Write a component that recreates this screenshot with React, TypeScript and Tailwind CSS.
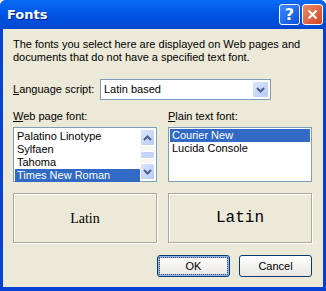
import React from 'react';

const ui = { fontFamily: '"Liberation Sans", Tahoma, sans-serif' };

const Chevron = ({ up = false }: { up?: boolean }) => (
  <svg width="9" height="6" viewBox="0 0 9 6" className={up ? 'rotate-180' : ''}>
    <path d="M1 1 L4.5 4.5 L8 1" fill="none" stroke="#4d6185" strokeWidth="2" />
  </svg>
);

const ScrollBtn = ({ up = false }: { up?: boolean }) => (
  <div className="flex h-[17px] w-[15px] items-center justify-center rounded-[2px] border border-white bg-gradient-to-br from-[#dbe6fd] to-[#b7cbf6]">
    <Chevron up={up} />
  </div>
);

const WebFonts = ['Palatino Linotype', 'Sylfaen', 'Tahoma', 'Times New Roman'];
const PlainFonts = ['Courier New', 'Lucida Console'];

const Item = ({ name, selected }: { name: string; selected?: boolean }) => (
  <div className={`h-[13px] pl-[2px] leading-[13px] ${selected ? 'bg-[#316ac5] text-white' : 'text-black'}`}>{name}</div>
);

export default function App() {
  return (
    <div className="flex h-[291px] w-[326px] flex-col rounded-t-[6px] bg-[#0842d4] text-[11px]" style={ui}>
      {/* title bar */}
      <div className="flex h-[29px] items-center rounded-t-[6px] bg-gradient-to-b from-[#0a6af7] via-[#0054e3] to-[#0046d0] pl-[7px] pr-[3px]">
        <span className="flex-1 text-[13px] font-bold text-white [text-shadow:1px_1px_#0a1e8c]" style={{ fontFamily: '"DejaVu Sans", sans-serif' }}>
          Fonts
        </span>
        <div className="flex gap-[2px]">
          <div className="flex h-[21px] w-[21px] items-center justify-center rounded-[3px] border border-white bg-gradient-to-br from-[#3c8cff] to-[#0a4fd8] text-[16px] font-bold leading-none text-white" style={{ fontFamily: '"DejaVu Sans", sans-serif' }}>
            ?
          </div>
          <div className="flex h-[21px] w-[21px] items-center justify-center rounded-[3px] border border-white bg-gradient-to-br from-[#e88a6a] to-[#d3421c]">
            <svg width="11" height="11" viewBox="0 0 11 11">
              <path d="M1.5 1.5 L9.5 9.5 M9.5 1.5 L1.5 9.5" stroke="white" strokeWidth="2.2" />
            </svg>
          </div>
        </div>
      </div>

      {/* body */}
      <div className="mx-[3px] mb-[4px] flex flex-1 flex-col bg-[#ece9d8] pl-[10px] pr-[11px] pt-[9px] text-black">
        <p className="leading-[13px]">
          The fonts you select here are displayed on Web pages and
          <br />
          documents that do not have a specified text font.
        </p>

        <div className="mt-[15px] flex h-[21px] items-center">
          <span className="w-[87px]">
            <u>L</u>anguage script:
          </span>
          <div className="flex h-[21px] w-[171px] items-center border border-[#7f9db9] bg-white pl-[3px] pr-[1px]">
            <span className="flex-1">Latin based</span>
            <div className="flex h-[17px] w-[17px] items-center justify-center rounded-[2px] border border-white bg-gradient-to-br from-[#dbe6fd] to-[#b7cbf6]">
              <Chevron />
            </div>
          </div>
        </div>

        <div className="mt-[8px] flex gap-[11px]">
          <div className="w-[144px]">
            <div className="h-[19px]">
              <u>W</u>eb page font:
            </div>
            <div className="flex h-[55px] border border-[#7f9db9] bg-white p-[1px]">
              <div className="flex-1 pt-[1px]">
                {WebFonts.map((f) => (
                  <Item key={f} name={f} selected={f === 'Times New Roman'} />
                ))}
              </div>
              <div className="flex w-[15px] flex-col justify-between bg-[#f7f6f0]">
                <ScrollBtn up />
                <div className="h-[8px] rounded-[2px] border border-white bg-[#c5d5f8]" />
                <ScrollBtn />
              </div>
            </div>
          </div>
          <div className="w-[144px]">
            <div className="h-[19px]">
              <u>P</u>lain text font:
            </div>
            <div className="h-[55px] border border-[#7f9db9] bg-white p-[1px]">
              {PlainFonts.map((f) => (
                <Item key={f} name={f} selected={f === 'Courier New'} />
              ))}
            </div>
          </div>
        </div>

        <div className="mt-[11px] flex gap-[11px]">
          <div className="flex h-[50px] w-[144px] items-center justify-center border border-[#aca899] shadow-[inset_1px_1px_white,1px_1px_white] text-[14px]" style={{ fontFamily: '"Liberation Serif", serif' }}>
            Latin
          </div>
          <div className="flex h-[50px] w-[144px] items-center justify-center border border-[#aca899] shadow-[inset_1px_1px_white,1px_1px_white] text-[16px]" style={{ fontFamily: '"Liberation Mono", monospace' }}>
            Latin
          </div>
        </div>

        <div className="mt-[12px] flex justify-end gap-[9px]">
          <button className="h-[22px] w-[73px] rounded-[3px] border border-[#003c74] bg-gradient-to-b from-white to-[#e8e7e0] p-[1px] shadow-[inset_0_0_0_2px_#8fb1ee]">
            <div className="flex h-full w-full items-center justify-center border border-dotted border-[#555]">OK</div>
          </button>
          <button className="h-[22px] w-[73px] rounded-[3px] border border-[#003c74] bg-gradient-to-b from-white to-[#e8e7e0]">
            Cancel
          </button>
        </div>
      </div>
    </div>
  );
}
